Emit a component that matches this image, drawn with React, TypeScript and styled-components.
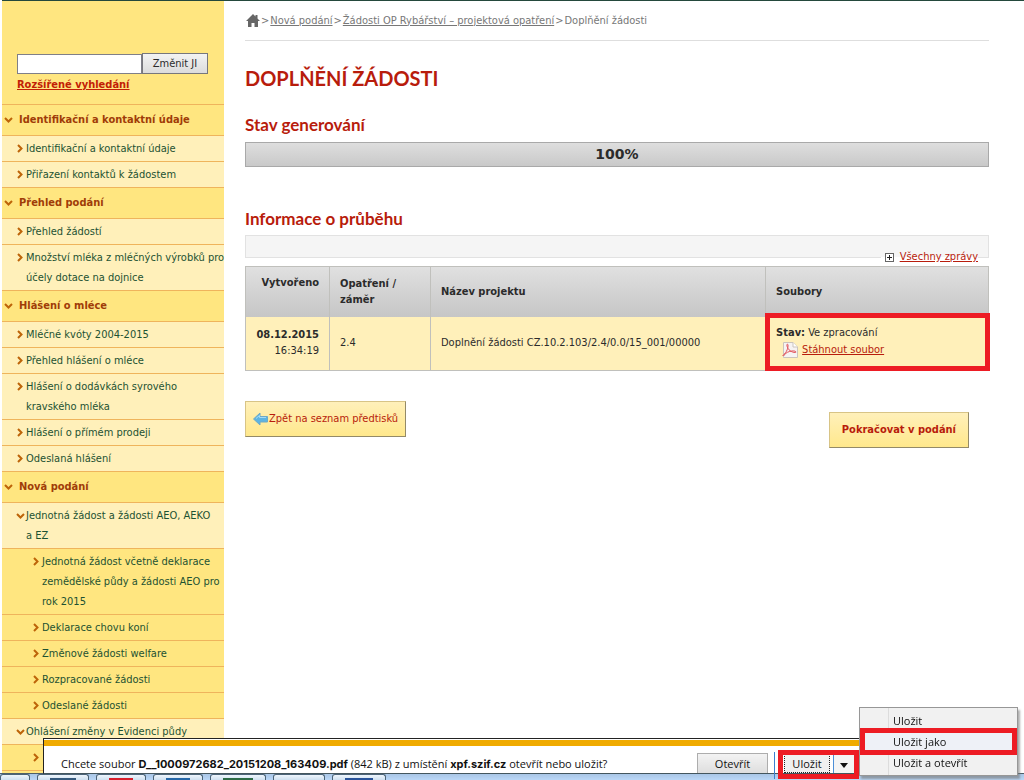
import React from 'react';
import styled, { createGlobalStyle, css } from 'styled-components';

const sans = '"DejaVu Sans Condensed", "DejaVu Sans", Tahoma, sans-serif';
const dialogSans = '"Open Sans", "Segoe UI", sans-serif';
const headingSans = 'Lato, "Century Gothic", sans-serif';

const color = {
  red: '#b81c0c',
  marker: '#ed1c24',
  rule: '#efb45c',
  gold: '#ffe680',
  pale: '#fff0ba',
  green: '#1d5232',
  text: '#2b2b2b',
};

const GlobalStyle = createGlobalStyle`
  *, *::before, *::after { box-sizing: border-box; }
  body { margin: 0; background: #fff; font: 11px/16px ${sans}; color: ${color.text}; }
  a { color: inherit; }
  button, input { font: inherit; }
`;

const Page = styled.div`
  display: flex;
  height: 100vh;
  overflow: hidden;
  padding: 0 0 0 2px;
`;

const Sidebar = styled.aside`
  flex: 0 0 222px;
  min-width: 0;
  border-top: 1px solid #24493c;
  background: ${color.gold};
`;

const Search = styled.form`
  display: flex;
  flex-wrap: wrap;
  align-items: center;
  height: 104px;
  align-content: flex-start;
  padding: 52px 16px 0 15px;
  border-bottom: 1px solid ${color.rule};
`;

const SearchInput = styled.input`
  flex: 1;
  min-width: 0;
  height: 20px;
  border: 1px solid #7f7f88;
  background: #fff;
`;

const SearchButton = styled.button`
  width: 66px;
  height: 21px;
  padding: 0;
  border: 1px solid #77777c;
  background: linear-gradient(#f3f3f3, #dcdcdc);
  color: ${color.text};
`;

const AdvancedLink = styled.a`
  width: 100%;
  margin-top: 3px;
  font-weight: bold;
  color: #c22005;
`;

const NavHeading = styled.a`
  display: flex;
  align-items: center;
  gap: 5px;
  height: 31px;
  padding: 0 2px;
  border-bottom: 1px solid ${color.rule};
  color: #a03c08;
  font-weight: bold;
  text-decoration: none;
`;

const NavItem = styled.a<{ $deep?: boolean }>`
  display: flex;
  align-items: flex-start;
  padding: 3px 0 2px ${p => (p.$deep ? 30 : 14)}px;
  border-bottom: 1px solid ${color.rule};
  background: ${p => (p.$deep ? color.gold : color.pale)};
  color: ${color.green};
  line-height: 20px;
  text-decoration: none;
  white-space: pre;
`;

const Chevron = styled.svg`
  flex: none;
  width: 10px;
  height: 20px;
  fill: none;
  stroke: #bd6409;
  stroke-width: 2;
`;

const Main = styled.main`
  flex: 1;
  min-width: 0;
  padding: 0 35px 0 21px;
  border-top: 1px solid #24493c;
`;

const Breadcrumbs = styled.div`
  display: flex;
  align-items: center;
  gap: 1px;
  height: 40px;
  padding-left: 1px;
  border-bottom: 1px solid #dedede;
  color: #777;
  white-space: nowrap;
`;

const HomeIcon = styled.svg`
  width: 14px;
  height: 13px;
  fill: #666;
`;

const Title = styled.h1`
  margin: 23px 0 0;
  font: bold 20px/28px ${headingSans};
  color: ${color.red};
  text-transform: uppercase;
`;

const Subtitle = styled.h2<{ $top: number }>`
  margin: ${p => p.$top}px 0 0;
  font: bold 17px/24px ${headingSans};
  color: ${color.red};
`;

const Progress = styled.div`
  height: 25px;
  margin-top: 5px;
  border: 1px solid #a9a9a9;
  background: linear-gradient(#dedede, #c9c9c9);
  font: bold 14px/23px "DejaVu Sans", sans-serif;
  text-align: center;
`;

const Messages = styled.div`
  position: relative;
  height: 23px;
  margin: 4px 0 8px;
  border: 1px solid #e2e2e2;
  background: #f5f5f5;
`;

const MessagesLink = styled.a`
  position: absolute;
  right: 10px;
  bottom: -8px;
  display: flex;
  align-items: center;
  gap: 6px;
  padding-left: 4px;
  background: linear-gradient(#f5f5f5 50%, #fff 50%);
  color: ${color.red};
`;

const Table = styled.table`
  width: 100%;
  table-layout: fixed;
  border-collapse: collapse;
  border: 1px solid #c0c0bc;
`;

const cell = css<{ $right?: boolean; $top?: boolean }>`
  border: 1px solid #c0c0bc;
  padding: 8px 10px;
  text-align: ${p => (p.$right ? 'right' : 'left')};
  vertical-align: ${p => (p.$top ? 'top' : 'middle')};
`;

const HeadRow = styled.tr`
  height: 50px;
  background: linear-gradient(#e0e0e0, #c6c6c6);
`;

const Th = styled.th<{ $right?: boolean; $top?: boolean; $width?: string }>`
  ${cell}
  width: ${p => p.$width || 'auto'};
  border-bottom: 0;
`;

const BodyRow = styled.tr`
  height: 54px;
  background: ${color.pale};
`;

const Td = styled.td<{ $right?: boolean; $top?: boolean }>`
  ${cell}
  border-top: 0;
`;

const MarkedTd = styled(Td)`
  position: relative;
  &::after {
    content: '';
    position: absolute;
    inset: -4px -2px -1px -1px;
    border: 5px solid ${color.marker};
    pointer-events: none;
  }
`;

const FileLine = styled.div`
  display: flex;
  align-items: center;
  gap: 4px;
  height: 18px;
  padding-left: 6px;
  color: ${color.red};
`;

const Actions = styled.div`
  display: flex;
  justify-content: space-between;
  align-items: flex-start;
  margin-top: 30px;
  padding-right: 20px;
`;

const ActionButton = styled.button<{ $strong?: boolean }>`
  display: flex;
  align-items: center;
  gap: 1px;
  height: 36px;
  margin-top: ${p => (p.$strong ? 11 : 0)}px;
  padding: 0 ${p => (p.$strong ? 12 : 7)}px;
  border: 1px solid #d8c486;
  border-right-color: #938a68;
  border-bottom-color: #938a68;
  background: linear-gradient(#fff0ba, #ffe88c);
  color: ${color.red};
  font-weight: ${p => (p.$strong ? 'bold' : 'normal')};
`;

const DownloadBar = styled.section`
  position: fixed;
  left: 43px;
  right: 165px;
  bottom: 6px;
  display: flex;
  align-items: flex-start;
  height: 36px;
  padding: 7px 1px 0 17px;
  border-top: 1px solid #222;
  border-left: 1px solid #222;
  border-bottom: 1px solid #44565e;
  background: linear-gradient(#fff 1px, #f0ab00 1px, #f0ab00 7px, #fff 7px);
  color: #111;
  font-family: ${dialogSans};
`;

const Prompt = styled.p`
  flex: 1;
  margin: 0;
  line-height: 36px;
  white-space: nowrap;
  b { font-family: Inter, ${dialogSans}; }
`;

const OpenButton = styled.button`
  flex: none;
  width: 71px;
  height: 20px;
  margin-top: 7px;
  margin-right: 6px;
  padding: 1px 0 0;
  border: 1px solid #adadad;
  border-bottom: 0;
  background: linear-gradient(#f3f3f3, #dedede);
  color: #111;
`;

const SplitButton = styled.div`
  position: relative;
  flex: none;
  display: flex;
  width: 84px;
  height: 27px;
  margin-top: 6px;
  padding: 2px 3px;
  border-left: 1px solid #3c7fd0;
  &::after {
    content: '';
    position: absolute;
    inset: -2px -1px 0 3px;
    border: 5px solid ${color.marker};
    pointer-events: none;
  }
`;

const SaveButton = styled.button`
  flex: 1;
  height: 19px;
  margin-left: 6px;
  padding: 0;
  border: 1px dotted #222;
  background: #f0f0f0;
  color: #111;
`;

const ArrowButton = styled.button`
  width: 22px;
  height: 19px;
  margin-left: 3px;
  padding: 0 5px 0 4px;
  border: 0;
  border-left: 1px solid #4d8fd8;
  background: #f4f4f4;
`;

const Menu = styled.div`
  position: fixed;
  right: 6px;
  bottom: 4px;
  width: 159px;
  height: 69px;
  padding: 2px 1px;
  border: 1px solid #979797;
  background: linear-gradient(90deg, #f1f1f1 28px, #dcdcdc 28px, #dcdcdc 29px, #f1f1f1 29px);
  box-shadow: 2px 3px 2px #77777799;
`;

const MenuItem = styled.button<{ $marked?: boolean }>`
  position: relative;
  display: block;
  width: 100%;
  height: 21px;
  padding: 0 0 0 32px;
  border: 0;
  background: ${p => (p.$marked ? '#eef1f7' : 'transparent')};
  color: #111;
  font-family: ${dialogSans};
  text-align: left;
  ${p => p.$marked && css`
    &::after {
      content: '';
      position: absolute;
      inset: -3px -1px;
      border: 5px solid ${color.marker};
    }
  `}
`;

const Taskbar = styled.footer`
  position: fixed;
  left: 0;
  right: 0;
  bottom: 0;
  display: flex;
  gap: 7px;
  height: 7px;
  border-top: 1px solid #4e6069;
  background: linear-gradient(#a9c6e6, #bad7f7);
`;

const Task = styled.div<{ $width: number; $mark?: string }>`
  flex: none;
  width: ${p => p.$width}px;
  padding: 3px 12px 0;
  border: 1px solid #4c6478;
  border-bottom: 0;
  border-radius: 3px 3px 0 0;
  background: linear-gradient(#eef6fd, #cfe0f0);
  &::before {
    content: '';
    display: block;
    height: 3px;
    background: ${p => p.$mark || 'transparent'};
  }
`;

const Arrow = ({ down }: { down?: boolean }) => (
  <Chevron viewBox="0 0 10 20" aria-hidden="true">
    <path d={down ? 'M1 8 L4.500 11.500 L8 8' : 'M2 6 L5.500 9.500 L2 13'} />
  </Chevron>
);

type Entry = { label: string; deep?: boolean; open?: boolean };
const menu: { title: string; items: Entry[] }[] = [
  {
    title: 'Identifikační a kontaktní údaje',
    items: [{ label: 'Identifikační a kontaktní údaje' }, { label: 'Přiřazení kontaktů k žádostem' }],
  },
  {
    title: 'Přehled podání',
    items: [{ label: 'Přehled žádostí' }, { label: 'Množství mléka z mléčných výrobků pro\núčely dotace na dojnice' }],
  },
  {
    title: 'Hlášení o mléce',
    items: [
      { label: 'Mléčné kvóty 2004-2015' },
      { label: 'Přehled hlášení o mléce' },
      { label: 'Hlášení o dodávkách syrového\nkravského mléka' },
      { label: 'Hlášení o přímém prodeji' },
      { label: 'Odeslaná hlášení' },
    ],
  },
  {
    title: 'Nová podání',
    items: [
      { label: 'Jednotná žádost a žádosti AEO, AEKO\na EZ', open: true },
      { label: 'Jednotná žádost včetně deklarace\nzemědělské půdy a žádosti AEO pro\nrok 2015', deep: true },
      { label: 'Deklarace chovu koní', deep: true },
      { label: 'Změnové žádosti welfare', deep: true },
      { label: 'Rozpracované žádosti', deep: true },
      { label: 'Odeslané žádosti', deep: true },
      { label: 'Ohlášení změny v Evidenci půdy', open: true },
      { label: '', deep: true },
    ],
  },
];

const tasks = [
  { width: 30 },
  { width: 52, mark: '#35597c' },
  { width: 50, mark: '#d8202c' },
  { width: 50, mark: '#2467a8' },
  { width: 56, mark: '#2c6b46' },
  { width: 52 },
  { width: 54, mark: '#28539a' },
];

export default function App() {
  return (
    <>
      <GlobalStyle />
      <Page>
        <Sidebar>
          <Search onSubmit={e => e.preventDefault()}>
            <SearchInput type="text" aria-label="JI" />
            <SearchButton>Změnit JI</SearchButton>
            <AdvancedLink href="#hledani">Rozšířené vyhledání</AdvancedLink>
          </Search>
          <nav>
            {menu.map(group => (
              <React.Fragment key={group.title}>
                <NavHeading href="#menu">
                  <Arrow down />
                  {group.title}
                </NavHeading>
                {group.items.map(item => (
                  <NavItem key={item.label} href="#menu" $deep={item.deep}>
                    <Arrow down={item.open} />
                    <span>{item.label}</span>
                  </NavItem>
                ))}
              </React.Fragment>
            ))}
          </nav>
        </Sidebar>

        <Main>
          <Breadcrumbs>
            <HomeIcon viewBox="0 0 14 13" aria-hidden="true">
              <path d="M7 0 L9.500 2.500 V1 H11.500 V4.500 L14 7 H12 V13 H8.500 V9 H5.500 V13 H2 V7 H0 Z" />
            </HomeIcon>
            <span>&gt;</span>
            <a href="#podani">Nová podání</a>
            <span>&gt;</span>
            <a href="#zadosti">Žádosti OP Rybářství – projektová opatření</a>
            <span>&gt;</span>
            <span>Doplňění žádosti</span>
          </Breadcrumbs>

          <Title>Doplňění žádosti</Title>
          <Subtitle $top={21}>Stav generování</Subtitle>
          <Progress>100%</Progress>

          <Subtitle $top={40}>Informace o průběhu</Subtitle>
          <Messages>
            <MessagesLink href="#zpravy">
              <svg width="9" height="9" viewBox="0 0 9 9" aria-hidden="true">
                <rect x="0.500" y="0.500" width="8" height="8" fill="#fff" stroke="#666" />
                <path d="M2 4.500 H7 M4.500 2 V7" stroke="#222" />
              </svg>
              Všechny zprávy
            </MessagesLink>
          </Messages>

          <Table>
            <thead>
              <HeadRow>
                <Th $right $top $width="84px">Vytvořeno</Th>
                <Th $width="101px">Opatření / záměr</Th>
                <Th>Název projektu</Th>
                <Th $width="30%">Soubory</Th>
              </HeadRow>
            </thead>
            <tbody>
              <BodyRow>
                <Td $right>
                  <b>08.12.2015</b>
                  <br />
                  16:34:19
                </Td>
                <Td>2.4</Td>
                <Td>Doplnění žádosti CZ.10.2.103/2.4/0.0/15_001/00000</Td>
                <MarkedTd $top>
                  <div>
                    <b>Stav:</b> Ve zpracování
                  </div>
                  <FileLine>
                    <svg width="16" height="16" viewBox="0 0 16 16" aria-hidden="true">
                      <path d="M1.500 0.500 H11 L15.500 5 V15.500 H1.500 Z" fill="#f6f3f3" stroke="#cbc4bd" />
                      <path d="M11 0.500 V5 H15.500" fill="#fff" stroke="#cbc4bd" />
                      <path
                        d="M0.500 13.500 C3 12.500 6.500 7 6 3 C5.800 1.500 4.500 2 5 4 C6 8 9.500 10.500 13.500 10.500 C15 10 13 8.500 10 9 C7 9.300 3.500 10.500 1.500 14"
                        fill="none"
                        stroke="#e0525a"
                      />
                    </svg>
                    <a href="#soubor">Stáhnout soubor</a>
                  </FileLine>
                </MarkedTd>
              </BodyRow>
            </tbody>
          </Table>

          <Actions>
            <ActionButton>
              <svg width="15" height="14" viewBox="0 0 15 14" aria-hidden="true">
                <path d="M0.500 7 L7 1 V4.500 H14.500 V10 H7 V13 Z" fill="#5db4e2" stroke="#6fa9c6" />
                <path d="M3 6.500 L6.500 3.500 V5.500 H13" fill="none" stroke="#a4dbf4" />
              </svg>
              Zpět na seznam předtisků
            </ActionButton>
            <ActionButton $strong>Pokračovat v podání</ActionButton>
          </Actions>
        </Main>
      </Page>

      <Taskbar>
        {tasks.map((t, i) => (
          <Task key={i} $width={t.width} $mark={t.mark} />
        ))}
      </Taskbar>

      <DownloadBar>
        <Prompt>
          Chcete soubor <b>D__1000972682_20151208_163409.pdf</b> (842 kB) z umístění <b>xpf.szif.cz</b> otevřít nebo
          uložit?
        </Prompt>
        <OpenButton>Otevřít</OpenButton>
        <SplitButton>
          <SaveButton>Uložit</SaveButton>
          <ArrowButton aria-label="Další možnosti">
            <svg width="8" height="5" viewBox="0 0 8 5" aria-hidden="true">
              <path d="M0 0 H8 L4 5 Z" fill="#111" />
            </svg>
          </ArrowButton>
        </SplitButton>
      </DownloadBar>

      <Menu>
        <MenuItem>Uložit</MenuItem>
        <MenuItem $marked>Uložit jako</MenuItem>
        <MenuItem>Uložit a otevřít</MenuItem>
      </Menu>
    </>
  );
}
